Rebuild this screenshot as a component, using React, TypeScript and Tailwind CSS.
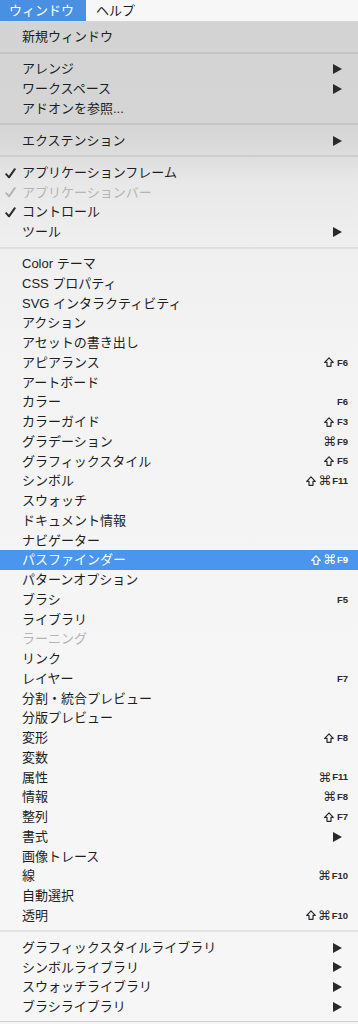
import React from "react";

type Item =
  | { sep: true }
  | {
      sep?: false;
      label: string;
      sub?: boolean;
      check?: boolean;
      disabled?: boolean;
      active?: boolean;
      shift?: boolean;
      cmd?: boolean;
      key?: string;
    };

const items: Item[] = [
  { label: "新規ウィンドウ" },
  { sep: true },
  { label: "アレンジ", sub: true },
  { label: "ワークスペース", sub: true },
  { label: "アドオンを参照..." },
  { sep: true },
  { label: "エクステンション", sub: true },
  { sep: true },
  { label: "アプリケーションフレーム", check: true },
  { label: "アプリケーションバー", check: true, disabled: true },
  { label: "コントロール", check: true },
  { label: "ツール", sub: true },
  { sep: true },
  { label: "Color テーマ" },
  { label: "CSS プロパティ" },
  { label: "SVG インタラクティビティ" },
  { label: "アクション" },
  { label: "アセットの書き出し" },
  { label: "アピアランス", shift: true, key: "F6" },
  { label: "アートボード" },
  { label: "カラー", key: "F6" },
  { label: "カラーガイド", shift: true, key: "F3" },
  { label: "グラデーション", cmd: true, key: "F9" },
  { label: "グラフィックスタイル", shift: true, key: "F5" },
  { label: "シンボル", shift: true, cmd: true, key: "F11" },
  { label: "スウォッチ" },
  { label: "ドキュメント情報" },
  { label: "ナビゲーター" },
  { label: "パスファインダー", shift: true, cmd: true, key: "F9", active: true },
  { label: "パターンオプション" },
  { label: "ブラシ", key: "F5" },
  { label: "ライブラリ" },
  { label: "ラーニング", disabled: true },
  { label: "リンク" },
  { label: "レイヤー", key: "F7" },
  { label: "分割・統合プレビュー" },
  { label: "分版プレビュー" },
  { label: "変形", shift: true, key: "F8" },
  { label: "変数" },
  { label: "属性", cmd: true, key: "F11" },
  { label: "情報", cmd: true, key: "F8" },
  { label: "整列", shift: true, key: "F7" },
  { label: "書式", sub: true },
  { label: "画像トレース" },
  { label: "線", cmd: true, key: "F10" },
  { label: "自動選択" },
  { label: "透明", shift: true, cmd: true, key: "F10" },
  { sep: true },
  { label: "グラフィックスタイルライブラリ", sub: true },
  { label: "シンボルライブラリ", sub: true },
  { label: "スウォッチライブラリ", sub: true },
  { label: "ブラシライブラリ", sub: true },
];

const Check = ({ color }: { color: string }) => (
  <svg width="11" height="11" viewBox="0 0 11 11" className="absolute left-[5px] top-[5px]">
    <path d="M1.2 6.2 L4 9.3 L9.8 1.2" fill="none" stroke={color} strokeWidth="2" strokeLinecap="round" strokeLinejoin="round" />
  </svg>
);

const Arrow = ({ color }: { color: string }) => (
  <svg width="9" height="10" viewBox="0 0 9 10" className="absolute right-[16px] top-[5px]">
    <polygon points="0,0 9,5 0,10" fill={color} />
  </svg>
);

const Shift = ({ color }: { color: string }) => (
  <svg width="10" height="10" viewBox="0 0 10 10" className="mr-[2px]">
    <polygon
      points="5,0.8 9.3,5.4 7,5.4 7,9.3 3,9.3 3,5.4 0.7,5.4"
      fill="none"
      stroke={color}
      strokeWidth="1.2"
      strokeLinejoin="round"
    />
  </svg>
);

export default function App() {
  return (
    <div
      className="w-[358px] h-[1024px] overflow-hidden bg-[#f6f6f6]"
      style={{ fontFamily: '"Liberation Sans", "Noto Sans CJK JP", sans-serif' }}
    >
      {/* menu bar */}
      <div className="h-[22px] flex items-stretch bg-[#f7f7f7] border-b border-[#d6d6d6] text-[13px]">
        <div className="bg-[#4a90e2] text-white px-[9px] flex items-center w-[86px]">ウィンドウ</div>
        <div className="text-[#1c1c1c] pl-[10px] flex items-center">ヘルプ</div>
      </div>
      {/* menu panel */}
      <div className="pt-[5px] pb-[4px] bg-[linear-gradient(180deg,#d3d3d3_0px,#d5d5d5_100px,#dadada_125px,#e8e8e8_160px,#efefef_220px,#f3f3f3_320px,#f6f6f6_700px,#f6f6f6_100%)] text-[13px] border-b border-[#cfcfcf]">
        {items.map((it, i) => {
          if (it.sep) {
            return (
              <div key={i} className="h-[12.25px] flex items-center">
                <div className="w-full h-[2px] bg-black/[0.07]" />
              </div>
            );
          }
          const textColor = it.active ? "text-white" : it.disabled ? "text-[#b4b4b4]" : "text-[#1e1e1e]";
          const iconColor = it.active ? "#ffffff" : it.disabled ? "#b4b4b4" : "#2a2a2a";
          return (
            <div
              key={i}
              className={`relative h-[19.75px] flex items-center pl-[22px] pr-[10px] leading-none ${textColor} ${it.active ? "bg-[#4a96ee]" : ""}`}
            >
              {it.check && <Check color={iconColor} />}
              <span className="whitespace-nowrap">{it.label}</span>
              {it.sub && <Arrow color={iconColor} />}
              {it.key && (
                <span className={`ml-auto flex items-center ${it.active ? "text-white" : "text-[#2a2a2a]"}`}>
                  {it.shift && <Shift color={it.active ? "#ffffff" : "#2a2a2a"} />}
                  {it.cmd && (
                    <span
                      className="text-[13px] leading-none"
                      style={{ fontFamily: '"DejaVu Sans", sans-serif' }}
                    >
                      ⌘
                    </span>
                  )}
                  <span className="text-[9.5px] font-bold ml-[1px]" style={{ fontFamily: '"Liberation Sans", sans-serif' }}>
                    {it.key}
                  </span>
                </span>
              )}
            </div>
          );
        })}
      </div>
    </div>
  );
}
